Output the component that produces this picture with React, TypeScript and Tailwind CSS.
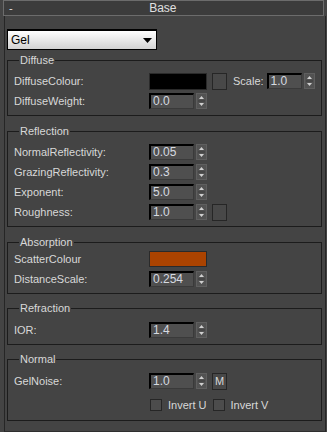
import React from "react";

const font = "font-['Liberation_Sans',Arial,sans-serif]";

function Arrows() {
  return (
    <div className="w-[11px] h-[16px] bg-[#525252] border border-[#5f5f5f] flex flex-col items-center justify-center">
      <svg width="9" height="14" viewBox="0 0 9 14">
        <path d="M4.5 2 L7 5 L2 5 Z" fill="#d0d0d0" />
        <line x1="1" y1="7" x2="8" y2="7" stroke="#3a3a3a" strokeWidth="1" />
        <path d="M2 9 L7 9 L4.5 12 Z" fill="#d0d0d0" />
      </svg>
    </div>
  );
}

function Spinner({ value, narrow }: { value: string; narrow?: boolean }) {
  return (
    <div className="flex items-center gap-[2px]">
      <div
        className={`${narrow ? "w-[35px]" : "w-[45px]"} h-[16px] bg-[#4f4f4f] border-t-2 border-l-2 border-black border-r border-b border-r-[#3a3a3a] border-b-[#3a3a3a] pl-[2px] text-[12px] leading-[13px] text-[#d6dae0] flex items-center`}
      >
        {value}
      </div>
      <Arrows />
    </div>
  );
}

function SquareBtn({ children }: { children?: React.ReactNode }) {
  return (
    <div className="w-[15px] h-[17px] border border-[#262626] bg-[#484848] flex items-center justify-center text-[11px] text-[#d8d8d8]">
      {children}
    </div>
  );
}

function Row({ label, children }: { label: string; children?: React.ReactNode }) {
  return (
    <div className="h-[20px] flex items-center">
      <div className="w-[135px] shrink-0">{label}</div>
      {children}
    </div>
  );
}

function Group({
  title,
  className,
  children,
}: {
  title: string;
  className: string;
  children: React.ReactNode;
}) {
  return (
    <fieldset className={`ml-[2px] mr-[3px] border border-[#1c1c1c] pl-[6px] pb-[4px] ${className}`}>
      <legend className="ml-[5px] px-[1px] leading-[13px] text-[#d8d8d8]">{title}</legend>
      {children}
    </fieldset>
  );
}

function Check({ label }: { label: string }) {
  return (
    <div className="flex items-center gap-[6px]">
      <div className="w-[12px] h-[12px] border border-[#262626] bg-[#4c4c4c]" />
      <span>{label}</span>
    </div>
  );
}

export default function App() {
  return (
    <div className={`w-[327px] h-[432px] bg-[#444444] text-[11px] text-[#d8d8d8] overflow-hidden flex flex-col ${font}`}>
      {/* rollout header */}
      <div className="mx-[3px] h-[16px] shrink-0 border border-[#6c6c6c] bg-[#3c3c3c] flex items-center relative">
        <span className="ml-[5px] text-[#e0e0e0]">-</span>
        <span className="flex-1 text-center pr-[10px] text-[12px] text-[#e0e0e0]">Base</span>
      </div>

      {/* rollout body */}
      <div className="flex-1 ml-[4px] mr-[1px] border-l border-r border-[#262626] border-b border-b-[#2e2e2e]">
        <div className="mt-[13px] ml-[2px] w-[150px] h-[21px] border border-black border-t-2 bg-gradient-to-b from-[#ffffff] to-[#d2d2d2] flex items-center justify-between pl-[3px] pr-[4px] text-[12px] text-black">
          <span>Gel</span>
          <svg width="9" height="5" viewBox="0 0 9 5">
            <path d="M0 0 L9 0 L4.5 5 Z" fill="#000" />
          </svg>
        </div>

        <Group title="Diffuse" className="mt-[4px] pt-[4px]">
          <Row label="DiffuseColour:">
            <div className="w-[58px] h-[17px] bg-black border border-[#2a2a2a]" />
            <div className="ml-[5px]">
              <SquareBtn />
            </div>
            <span className="ml-[6px] mr-[3px]">Scale:</span>
            <Spinner value="1.0" narrow />
          </Row>
          <Row label="DiffuseWeight:">
            <Spinner value="0.0" />
          </Row>
        </Group>

        <Group title="Reflection" className="mt-[9px] pt-[4px]">
          <Row label="NormalReflectivity:">
            <Spinner value="0.05" />
          </Row>
          <Row label="GrazingReflectivity:">
            <Spinner value="0.3" />
          </Row>
          <Row label="Exponent:">
            <Spinner value="5.0" />
          </Row>
          <Row label="Roughness:">
            <Spinner value="1.0" />
            <div className="ml-[5px]">
              <SquareBtn />
            </div>
          </Row>
        </Group>

        <Group title="Absorption" className="mt-[9px] pt-0">
          <Row label="ScatterColour">
            <div className="w-[58px] h-[16px] bg-[#ab4300] border border-[#2a2a2a]" />
          </Row>
          <Row label="DistanceScale:">
            <Spinner value="0.254" />
          </Row>
        </Group>

        <Group title="Refraction" className="mt-[8px] pt-[5px]">
          <Row label="IOR:">
            <Spinner value="1.4" />
          </Row>
        </Group>

        <Group title="Normal" className="mt-[8px] pt-[5px] pb-[5px]">
          <Row label="GelNoise:">
            <Spinner value="1.0" />
            <div className="ml-[5px]">
              <SquareBtn>M</SquareBtn>
            </div>
          </Row>
          <div className="mt-[4px] h-[20px] flex items-center pl-[136px] gap-[6px]">
            <Check label="Invert U" />
            <Check label="Invert V" />
          </div>
        </Group>
      </div>
    </div>
  );
}
